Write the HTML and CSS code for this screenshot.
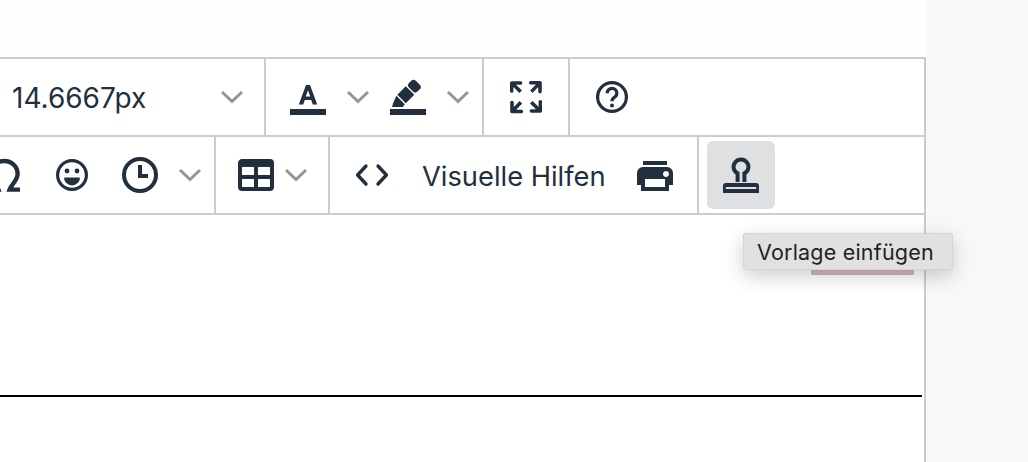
FILE: index.html
```html
<!DOCTYPE html>
<html lang="de">
<head>
  <meta charset="UTF-8" />
  <title>Editor</title>
  <link rel="stylesheet" href="styles.css">
</head>
<body>

  <svg class="defs" width="0" height="0">
    <symbol id="chevron" viewBox="0 0 24 14">
      <path d="M2 2l10 9.5L22 2" fill="none" stroke="currentColor" stroke-width="3"/>
    </symbol>
  </svg>

  <div class="page">
    <main class="editor">
      <div class="frame">
        <div class="toolbar">

          <!-- First row -->
          <div class="row">
            <div class="group group-select">
              <span class="select-value">14.6667px</span>
              <span class="chev"><svg><use href="#chevron"/></svg></span>
            </div>
            <div class="group">
              <span class="btn">
                <svg class="icon" viewBox="0 0 24 24">
                  <path fill-rule="evenodd" d="M7.4 15.8L11 6h2l3.600 9.800h-2.200l-.8-2.300h-3.200l-.8 2.300zM10.900 11.800h2.200L12 8.600z"/>
                  <path d="M3 18h18v3H3z"/>
                </svg>
              </span>
              <span class="chev"><svg><use href="#chevron"/></svg></span>
              <span class="btn">
                <svg class="icon" viewBox="0 0 24 24">
                  <rect x="-2.400" y="-3" width="4.800" height="6" rx="1.600" transform="translate(15.200 6.600) rotate(-45)"/>
                  <rect x="-3" y="-3" width="6" height="6" transform="translate(10.900 10.900) rotate(-45)"/>
                  <path d="M6.200 11.400l4.200 4.200-1 1.400H4l.6-2z"/>
                  <path d="M3 18h18v3H3z"/>
                </svg>
              </span>
              <span class="chev"><svg><use href="#chevron"/></svg></span>
            </div>
            <div class="group">
              <span class="btn">
                <svg class="icon" viewBox="0 0 24 24">
                  <path d="M15.3 10l-1.2-1.3 2.9-3h-2.3a.9.9 0 1 1 0-1.7H19c.5 0 .9.4.9.9v4.4a.9.9 0 1 1-1.8 0V7l-2.9 3zm0 4l3 3v-2.3a.9.9 0 1 1 1.7 0V19c0 .5-.4.9-.9.9h-4.4a.9.9 0 1 1 0-1.8H17l-3-2.9 1.3-1.2zM10 15.4l-2.9 3h2.3a.9.9 0 1 1 0 1.7H5a.9.9 0 0 1-.9-.9v-4.4a.9.9 0 1 1 1.8 0V17l2.9-3 1.2 1.3zM8.700 10L5.700 7v2.300a.9.9 0 0 1-1.700 0V5c0-.5.4-.9.9-.9h4.400a.9.9 0 0 1 0 1.800H7l3 2.900-1.300 1.200z"/>
                </svg>
              </span>
            </div>
            <div class="group group-last">
              <span class="btn">
                <svg class="icon" viewBox="0 0 24 24">
                  <circle cx="12" cy="12" r="7.200" fill="none" stroke="currentColor" stroke-width="1.600"/>
                  <path d="M9.600 10.100a2.400 2.400 0 1 1 3.700 2c-.9.6-1.300 1-1.300 2" fill="none" stroke="currentColor" stroke-width="1.600"/>
                  <circle cx="12" cy="16.200" r="1"/>
                </svg>
              </span>
            </div>
          </div>

          <!-- Second row, scrolled off to the left -->
          <div class="row row-shifted">
            <div class="group group-first">
              <span class="btn">
                <svg class="icon" viewBox="0 0 24 24">
                  <path d="M12 5c4 0 6.800 2.800 6.800 6.500 0 3.200-3 5-4 7.800H20M12 5C8 5 5.200 7.800 5.200 11.500c0 3.200 3 5 4 7.800H4" fill="none" stroke="currentColor" stroke-width="2.200"/>
                </svg>
              </span>
              <span class="btn">
                <svg class="icon" viewBox="0 0 24 24">
                  <circle cx="12" cy="12" r="7.200" fill="none" stroke="currentColor" stroke-width="1.600"/>
                  <circle cx="9.500" cy="10" r="1.200"/>
                  <circle cx="14.500" cy="10" r="1.200"/>
                  <path d="M8 13.200h8a4 4 0 0 1-8 0z"/>
                </svg>
              </span>
              <span class="btn">
                <svg class="icon" viewBox="0 0 24 24">
                  <circle cx="12" cy="12" r="8" fill="none" stroke="currentColor" stroke-width="2"/>
                  <path d="M12 7v5.500h4" fill="none" stroke="currentColor" stroke-width="2"/>
                </svg>
              </span>
              <span class="chev"><svg><use href="#chevron"/></svg></span>
            </div>
            <div class="group">
              <span class="menu-btn">
                <svg class="icon" viewBox="0 0 24 24">
                  <path fill-rule="evenodd" d="M19 4a2 2 0 0 1 2 2v12a2 2 0 0 1-2 2H5a2 2 0 0 1-2-2V6c0-1.100.9-2 2-2h14zM5 14v4h6v-4H5zm14 0h-6v4h6v-4zm0-6h-6v4h6V8zM5 12h6V8H5v4z"/>
                </svg>
                <span class="chev"><svg><use href="#chevron"/></svg></span>
              </span>
            </div>
            <div class="group">
              <span class="btn">
                <svg class="icon" viewBox="0 0 24 24">
                  <path d="M9 7.500L4.800 12 9 16.500M15 7.500l4.200 4.500-4.200 4.500" fill="none" stroke="currentColor" stroke-width="1.700" stroke-linecap="round" stroke-linejoin="round"/>
                </svg>
              </span>
              <span class="text-btn">Visuelle Hilfen</span>
              <span class="btn">
                <svg class="icon" viewBox="0 0 24 24">
                  <path fill-rule="evenodd" d="M18 8H6a3 3 0 0 0-3 3v6h2v3h14v-3h2v-6a3 3 0 0 0-3-3zm-1 10H7v-4h10v4zm.5-5c-.8 0-1.500-.7-1.500-1.500s.7-1.500 1.500-1.500 1.500.7 1.500 1.500-.7 1.500-1.500 1.500zm.5-8H6v2h12V5z"/>
                </svg>
              </span>
            </div>
            <div class="group group-last">
              <span class="btn btn-active">
                <svg class="icon" viewBox="0 0 24 24">
                  <path d="M10.300 15.500v-4.300a3.700 3.700 0 1 1 3.400 0v4.300" fill="none" stroke="currentColor" stroke-width="2"/>
                  <path fill-rule="evenodd" d="M4.500 16h15a1.500 1.500 0 0 1 1.500 1.500V21H3v-3.500A1.500 1.500 0 0 1 4.500 16zM4.400 18v1h15.200v-1z"/>
                </svg>
              </span>
            </div>
          </div>
        </div>

        <div class="content">
          <div class="mark"></div>
          <hr class="rule">
        </div>
      </div>

      <div class="tooltip">Vorlage einfügen</div>
    </main>
    <aside class="side"></aside>
  </div>

</body>
</html>
```

FILE: styles.css
```css
:root {
  --ink: #222f3e;
  --line: #cccccc;
}
* { box-sizing: border-box; }
html, body {
  margin: 0;
  height: 100%;
  overflow: hidden;
}
body {
  background: #f8f8f8;
  color: var(--ink);
  font-family: 'Inter', 'Liberation Sans', sans-serif;
}
.defs { position: absolute; }

.page {
  display: flex;
  height: 462px;
}
.side { flex: 1; }

.editor {
  position: relative;
  width: 926px;
  padding-top: 57px;
  background: #fefefe;
  display: flex;
  flex-direction: column;
}
.frame {
  flex: 1;
  display: flex;
  flex-direction: column;
  border-top: 2px solid var(--line);
  border-right: 2px solid var(--line);
}

/* Toolbar */
.toolbar {
  background: #fff;
  overflow: hidden;
}
.row {
  display: flex;
  height: 78px;
  border-bottom: 2px solid var(--line);
}
.row-shifted {
  margin-left: -30px;
}
.group {
  display: flex;
  align-items: center;
  padding: 0 8px;
  border-right: 2px solid var(--line);
}
.group-select {
  width: 266px;
  padding: 0 16px 0 12px;
  justify-content: space-between;
}
.group-first { padding-left: 0; }
.group-last {
  flex: 1;
  border-right: 0;
}

.select-value,
.text-btn {
  line-height: 68px;
  white-space: nowrap;
}
.select-value {
  padding-top: 2px;
  font-size: 28px;
}
.text-btn {
  padding: 4px 15px 0 16px;
  font-size: 27.3px;
}

.btn {
  display: flex;
  align-items: center;
  justify-content: center;
  width: 68px;
  height: 68px;
  border-radius: 6px;
}
.btn-active { background: #dee0e2; }
.menu-btn {
  display: flex;
  align-items: center;
  width: 96px;
  height: 68px;
  padding: 0 8px;
}
.icon {
  display: block;
  width: 48px;
  height: 48px;
  fill: currentColor;
}
.chev {
  display: flex;
  align-items: center;
  justify-content: center;
  width: 32px;
  height: 68px;
  color: #8f969e;
}
.chev svg {
  width: 24px;
  height: 14px;
}

/* Content below the toolbar */
.content {
  flex: 1;
  background: #fff;
  padding-top: 44px;
}
.mark {
  width: 103px;
  height: 16px;
  margin-left: 811px;
  background: #d6b8b8;
}
.rule {
  width: 922px;
  height: 2px;
  margin: 120px 0 0;
  border: 0;
  background: #000;
}

.tooltip {
  position: absolute;
  top: 233px;
  left: 743px;
  width: 210px;
  height: 37px;
  padding-left: 13px;
  background: #e1e1e1;
  border: 1px solid #d5d5d5;
  border-radius: 2px;
  box-shadow: 0 6px 20px rgba(0, 0, 0, 0.2);
  color: #222;
  font-size: 21.5px;
  letter-spacing: 0.2px;
  line-height: 36px;
  white-space: nowrap;
}
```
